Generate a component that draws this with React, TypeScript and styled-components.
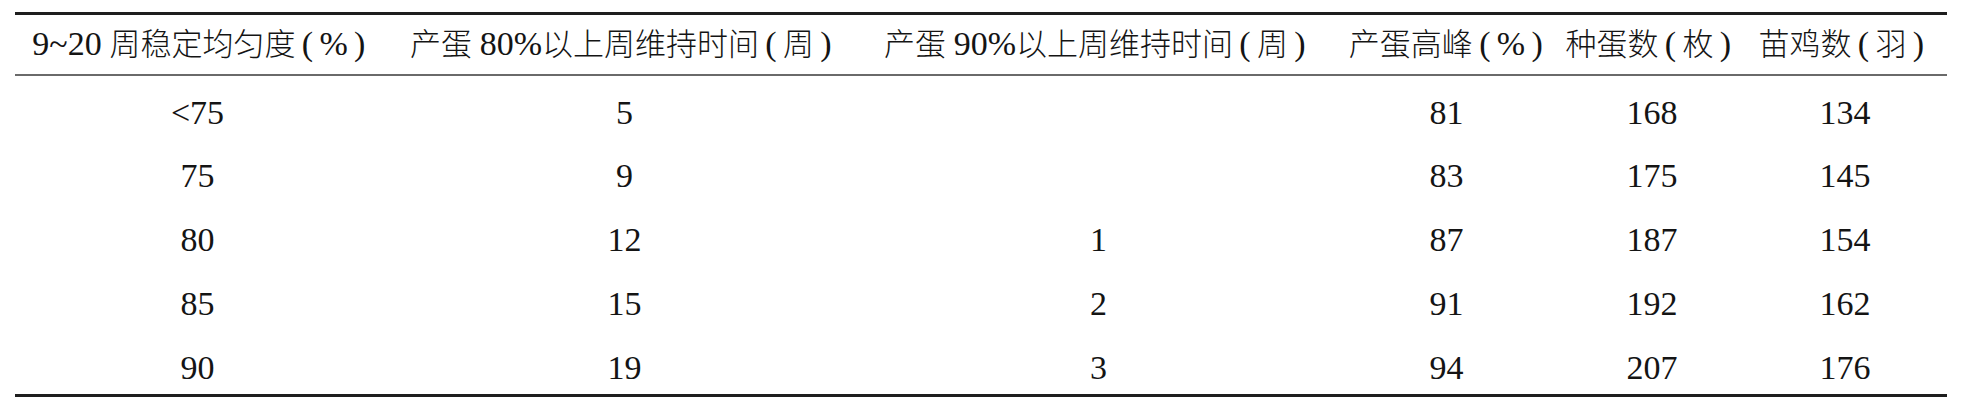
import React from 'react';
import styled, { createGlobalStyle } from 'styled-components';

const GlobalStyle = createGlobalStyle`
  html, body {
    margin: 0;
    padding: 0;
    background: #fff;
  }

  body {
    font-family: 'Liberation Serif', 'Noto Sans CJK SC', serif;
    color: #141414;
  }
`;

const Page = styled.div`
  padding: 12px 17px 0 15px;
`;

const Table = styled.table`
  width: 1932px;
  table-layout: fixed;
  border-collapse: collapse;
  border-top: 3px solid #1e1e1e;
  border-bottom: 3px solid #1e1e1e;
`;

// header text: Latin from Liberation Serif, CJK falls back to Noto Sans CJK
const HeadCell = styled.th`
  padding: 9px 0 9px;
  line-height: 40px;
  font-size: 31px;
  font-weight: 300;
  font-family: 'Liberation Serif', 'Noto Sans CJK SC', serif;
  text-align: center;
  white-space: nowrap;
  border-bottom: 2px solid #6a6a6a;
`;

const Num = styled.span`
  font-size: 34px;
  font-weight: 400;
`;

const Paren = styled.span`
  display: inline-block;
  width: 24px;
  text-align: center;
  font-size: 34px;
  font-weight: 400;
`;

const Row = styled.tr`
  td {
    padding-top: 11px;
    padding-bottom: 13px;
  }

  &:first-child td {
    padding-top: 17px;
    padding-bottom: 12px;
  }

  &:last-child td {
    padding-bottom: 6px;
  }
`;

const Cell = styled.td<{ $shift?: number }>`
  line-height: 40px;
  font-size: 34px;
  text-align: center;
  padding-right: ${(p) => (p.$shift ? `${p.$shift}px` : '0')};
`;

const widths = [374, 470, 478, 224, 181, 205];

const rows = [
  ['<75', '5', '', '81', '168', '134'],
  ['75', '9', '', '83', '175', '145'],
  ['80', '12', '1', '87', '187', '154'],
  ['85', '15', '2', '91', '192', '162'],
  ['90', '19', '3', '94', '207', '176'],
];

const Unit: React.FC<{ children: React.ReactNode }> = ({ children }) => (
  <>
    <Paren>(</Paren>
    {children}
    <Paren>)</Paren>
  </>
);

export default function App() {
  return (
    <Page>
      <GlobalStyle />
      <Table>
        <colgroup>
          {widths.map((w, i) => (
            <col key={i} style={{ width: w }} />
          ))}
        </colgroup>
        <thead>
          <tr>
            <HeadCell>
              <Num>9~20</Num> 周稳定均匀度
              <Unit>
                <Num>%</Num>
              </Unit>
            </HeadCell>
            <HeadCell>
              产蛋 <Num>80%</Num>以上周维持时间<Unit>周</Unit>
            </HeadCell>
            <HeadCell>
              产蛋 <Num>90%</Num>以上周维持时间<Unit>周</Unit>
            </HeadCell>
            <HeadCell>
              产蛋高峰
              <Unit>
                <Num>%</Num>
              </Unit>
            </HeadCell>
            <HeadCell>
              种蛋数<Unit>枚</Unit>
            </HeadCell>
            <HeadCell>
              苗鸡数<Unit>羽</Unit>
            </HeadCell>
          </tr>
        </thead>
        <tbody>
          {rows.map((r, i) => (
            <Row key={i}>
              {r.map((v, j) => (
                <Cell key={j} $shift={j === 0 ? 10 : j === 3 ? 6 : 0}>
                  {v}
                </Cell>
              ))}
            </Row>
          ))}
        </tbody>
      </Table>
    </Page>
  );
}
